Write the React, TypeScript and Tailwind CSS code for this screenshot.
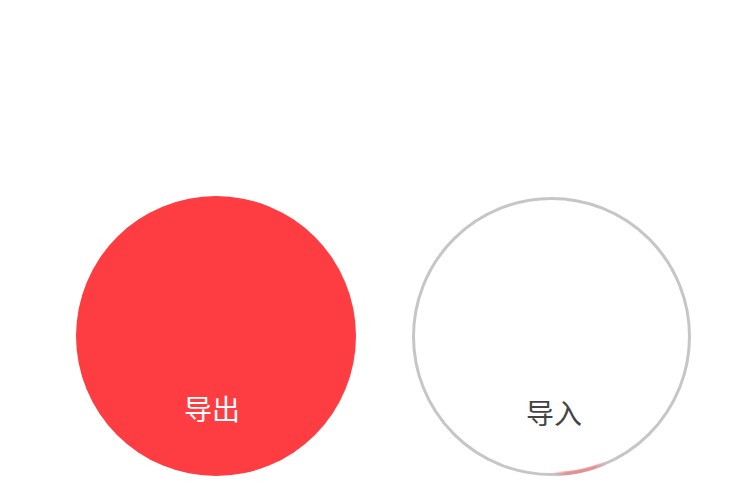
import React from "react";

export default function App() {
  return (
    <div
      className="w-[750px] h-[491px] bg-white overflow-hidden"
      style={{ fontFamily: '"Noto Sans CJK SC", "Noto Sans", sans-serif' }}
    >
      <div className="flex items-start pl-[76px] pt-[196px] gap-[56px]">
        <div className="w-[280px] h-[280px] rounded-full bg-[#fd3d42] flex items-end justify-center pb-[54px] pr-[8px]">
          <span className="text-[28px] leading-none text-white">导出</span>
        </div>
        <div className="relative mt-[1px] w-[279px] h-[279px] rounded-full border-[3px] border-[#c6c6c6] flex items-end justify-center pb-[47px] pl-[5px]">
          <span className="text-[28px] leading-none text-[#444444]">导入</span>
          <svg
            className="absolute -left-[3px] -top-[3px]"
            width="279"
            height="279"
            viewBox="0 0 279 279"
          >
            <defs>
              <linearGradient id="pinkArc" x1="141" y1="0" x2="195" y2="0" gradientUnits="userSpaceOnUse">
                <stop offset="0" stopColor="#f07a7e" stopOpacity="0" />
                <stop offset="0.25" stopColor="#f07a7e" stopOpacity="0.7" />
                <stop offset="0.75" stopColor="#f07a7e" stopOpacity="0.7" />
                <stop offset="1" stopColor="#f07a7e" stopOpacity="0" />
              </linearGradient>
            </defs>
            <path
              d="M141 277 A137.5 137.5 0 0 0 195 265.5"
              fill="none"
              stroke="url(#pinkArc)"
              strokeWidth="4"
              strokeLinecap="round"
            />
          </svg>
        </div>
      </div>
    </div>
  );
}
